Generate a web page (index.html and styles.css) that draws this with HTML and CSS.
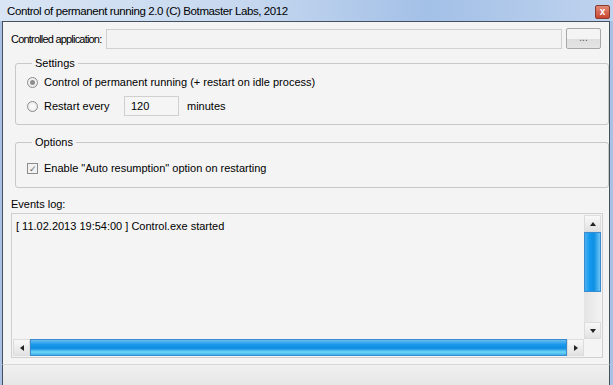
FILE: index.html
```html
<!DOCTYPE html>
<html lang="en">
<head>
  <meta charset="UTF-8">
  <title>Control of permanent running</title>
  <link rel="stylesheet" href="styles.css">
</head>
<body>
  <div class="window">
    <div class="titlebar">
      <span class="title">Control of permanent running 2.0 (C) Botmaster Labs, 2012</span>
      <span class="close">x</span>
    </div>

    <div class="client">
      <!-- Application path -->
      <div class="row-app">
        <span class="label">Controlled application:</span>
        <input type="text" class="path">
        <button class="browse">...</button>
      </div>

      <!-- Settings group -->
      <fieldset class="group settings">
        <legend>Settings</legend>
        <div class="opt">
          <span class="radio checked"></span>
          <span>Control of permanent running (+ restart on idle process)</span>
        </div>
        <div class="opt">
          <span class="radio"></span>
          <span class="restart">Restart every</span>
          <input type="text" class="minutes" value="120">
          <span>minutes</span>
        </div>
      </fieldset>

      <!-- Options group -->
      <fieldset class="group options">
        <legend>Options</legend>
        <div class="opt">
          <span class="check">&#10003;</span>
          <span>Enable "Auto resumption" option on restarting</span>
        </div>
      </fieldset>

      <div class="log-label">Events log:</div>
      <div class="log">
        <div class="log-body">
          <div class="log-text">[ 11.02.2013 19:54:00 ] Control.exe started</div>
          <div class="vscroll">
            <span class="arrow up"></span>
            <span class="vthumb"></span>
            <span class="vtrack"></span>
            <span class="arrow down"></span>
          </div>
        </div>
        <div class="hscroll">
          <span class="arrow left"></span>
          <span class="hthumb"></span>
          <span class="arrow right"></span>
          <span class="corner"></span>
        </div>
      </div>
    </div>

    <div class="statusbar"></div>
  </div>
</body>
</html>
```

FILE: styles.css
```css
body {
  margin: 0;
  font-family: "Liberation Sans", Arial, sans-serif;
  font-size: 11px;
  color: #000;
}
.window {
  width: 613px;
  height: 385px;
  display: flex;
  flex-direction: column;
  background: #a9c1e2;
  overflow: hidden;
}
.titlebar {
  height: 21px;
  display: flex;
  align-items: center;
  justify-content: space-between;
  padding: 0 3px 0 7px;
  background: linear-gradient(to right, #d9e5f4, #c6d8ef 40%, #a3c0e7 70%, #bfd3ee);
  box-sizing: border-box;
}
.title {
  font-size: 11.5px;
  letter-spacing: -0.4px;
  color: #000;
}
.close {
  width: 15px;
  height: 14px;
  margin-top: 2px;
  background: linear-gradient(#e08a78, #c9452f);
  border: 1px solid #8a3a2c;
  border-radius: 2px;
  color: #fff;
  font-weight: bold;
  font-size: 10px;
  line-height: 12px;
  text-align: center;
  box-sizing: border-box;
}
.client {
  flex: 1;
  margin: 0 3px 0 2px;
  border: 1px solid #44505e;
  border-bottom: none;
  background: #f4f4f4;
  display: flex;
  flex-direction: column;
  padding: 6px 8px 0 8px;
}
.row-app {
  display: flex;
  align-items: center;
  height: 21px;
}
.label {
  white-space: nowrap;
  flex-shrink: 0;
  margin-right: 5px;
  letter-spacing: -0.8px;
}
.path {
  flex: 1;
  height: 20px;
  margin: 0;
  border: 1px solid #d0d0d0;
  background: #f3f3f3;
  box-sizing: border-box;
}
.browse {
  margin-left: 4px;
  width: 35px;
  height: 21px;
  flex-shrink: 0;
  border: 1px solid #a8a8a8;
  border-radius: 2px;
  background: linear-gradient(#f4f4f4 50%, #dedede 51%, #e4e4e4);
  font-size: 10px;
  color: #555;
  padding: 0 0 3px;
  font-family: inherit;
}
.group {
  margin: 8px 0 0 4px;
  width: 594px;
  border: 1px solid #c8c8c8;
  border-radius: 3px;
  padding: 0 0 0 11px;
  box-sizing: border-box;
}
.group legend {
  padding: 0 3px;
  margin-left: 5px;
}
.settings {
  height: 68px;
}
.options {
  margin-top: 11px;
  height: 52px;
}
.opt {
  display: flex;
  align-items: center;
  height: 24px;
}
.settings .opt:first-of-type {
  margin-top: 1px;
}
.radio {
  width: 11px;
  height: 11px;
  border: 1px solid #8b8b8b;
  border-radius: 50%;
  background: radial-gradient(#fff, #e4e4e4);
  margin-right: 6px;
  box-sizing: border-box;
  display: flex;
  align-items: center;
  justify-content: center;
}
.radio.checked::after {
  content: "";
  width: 5px;
  height: 5px;
  border-radius: 50%;
  background: #8d8d8d;
}
.restart {
  width: 80px;
}
.minutes {
  width: 55px;
  height: 20px;
  margin: 0 8px 0 0;
  border: 1px solid #d0d0d0;
  background: #f5f5f5;
  padding: 0 0 0 6px;
  font-family: inherit;
  font-size: 11px;
  box-sizing: border-box;
}
.options .opt {
  margin-top: 8px;
}
.check {
  width: 11px;
  height: 11px;
  border: 1px solid #8b8b8b;
  background: #f2f2f2;
  margin-right: 6px;
  box-sizing: border-box;
  font-size: 9px;
  line-height: 10px;
  text-align: center;
  color: #666;
}
.log-label {
  margin-top: 10px;
}
.log {
  margin-top: 3px;
  width: 592px;
  height: 145px;
  border: 1px solid #cfcfcf;
  background: #f4f4f4;
  display: flex;
  flex-direction: column;
  padding: 1px;
  box-sizing: border-box;
}
.log-body {
  flex: 1;
  display: flex;
  justify-content: space-between;
}
.log-text {
  padding: 5px 0 0 3px;
}
.vscroll {
  width: 17px;
  display: flex;
  flex-direction: column;
  background: #eaeaea;
}
.vthumb {
  height: 60px;
  background: linear-gradient(to right, #4aaff0, #149aef 30%, #0e8fe4 60%, #6cc4f5);
  border: 1px solid #3a8ad0;
  box-sizing: border-box;
}
.vtrack {
  flex: 1;
  background: linear-gradient(to right, #e4e4e4, #f2f2f2);
}
.hscroll {
  height: 17px;
  display: flex;
}
.hthumb {
  flex: 1;
  background: linear-gradient(#6cbcf0, #1a9aec 30%, #0f8ae0 55%, #6fd8f7 80%, #3caee8);
  border: 1px solid #3a8ad0;
  box-sizing: border-box;
}
.arrow {
  width: 17px;
  height: 17px;
  background: linear-gradient(#f8f8f8, #e2e2e2);
  border: 1px solid #dcdcdc;
  box-sizing: border-box;
  display: flex;
  align-items: center;
  justify-content: center;
}
.arrow::after {
  content: "";
  border: 3px solid transparent;
}
.arrow.up::after {
  border-bottom: 4px solid #222;
  border-top: none;
}
.arrow.down::after {
  border-top: 4px solid #222;
  border-bottom: none;
}
.arrow.left::after {
  border-right: 4px solid #222;
  border-left: none;
}
.arrow.right::after {
  border-left: 4px solid #222;
  border-right: none;
}
.corner {
  width: 17px;
  height: 17px;
  background: #f4f4f4;
}
.statusbar {
  height: 20px;
  margin: 0 3px 0 2px;
  border-left: 1px solid #44505e;
  border-right: 1px solid #44505e;
  border-top: 1px solid #d8d8d8;
  background: linear-gradient(#f0f0f0, #e6e6e6);
}
```
